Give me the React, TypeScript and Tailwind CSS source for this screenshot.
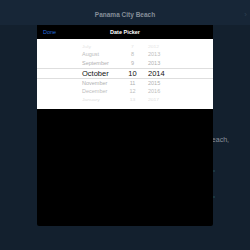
import React from "react";

const rows = [
  { m: "July", d: "7", y: "2012", cls: "h-[7px] text-[#e4e4e4] text-[5px] scale-y-[0.6]" },
  { m: "August", d: "8", y: "2013", cls: "h-[8px] text-[#bdbdbd] text-[5.5px]" },
  { m: "September", d: "9", y: "2013", cls: "h-[9px] text-[#b0b0b0] text-[5.5px]" },
];
const rowsBelow = [
  { m: "November", d: "11", y: "2015", cls: "h-[9px] text-[#b0b0b0] text-[5.5px]" },
  { m: "December", d: "12", y: "2016", cls: "h-[8px] text-[#bdbdbd] text-[5.5px]" },
  { m: "January", d: "13", y: "2017", cls: "h-[8px] text-[#e0e0e0] text-[5px] scale-y-[0.6]" },
];

const Row = ({ m, d, y, cls }: { m: string; d: string; y: string; cls: string }) => (
  <div className={`flex items-center pl-[45px] leading-none ${cls}`}>
    <span className="w-[40px]">{m}</span>
    <span className="w-[21px] text-center">{d}</span>
    <span className="ml-[5px]">{y}</span>
  </div>
);

const App = () => {
  return (
    <div
      className="relative w-[250px] h-[250px] overflow-hidden bg-[#13202e] flex flex-col"
      style={{ fontFamily: "'Liberation Sans', Arial, sans-serif" }}
    >
      {/* nav bar */}
      <div className="h-[25px] shrink-0 bg-[#172637] flex items-center justify-center relative">
        <span className="text-[6.5px] font-bold text-[#858e99] mt-[5px]">Panama City Beach</span>
        <span className="absolute right-[3px] top-[9px] text-[8px] text-[#2f4254]">›</span>
      </div>

      {/* background content */}
      <div className="flex flex-col items-end pr-[21px] pt-[110px] gap-[24px]">
        <p className="text-[7px] text-[#8a929c]">Panama City Beach,</p>
        <div className="flex flex-col gap-[24px] pr-[14px]">
          <span className="w-[2px] h-[2px] rounded-full bg-[#1f3f48]" />
          <span className="w-[2px] h-[2px] rounded-full bg-[#1f3f48]" />
        </div>
      </div>

      {/* date picker popover */}
      <div className="absolute left-[37px] top-[25px] w-[176px] h-[201px] bg-black rounded-b-[2px] flex flex-col overflow-hidden">
        <div className="h-[14px] flex items-center relative">
          <span className="absolute left-[6px] text-[5.5px] text-[#2468dc]">Done</span>
          <span className="mx-auto text-[5.5px] font-bold text-white">Date Picker</span>
        </div>
        <div className="h-[70px] bg-white flex flex-col pt-[5px]">
          {rows.map((r) => (
            <Row key={r.m} {...r} />
          ))}
          <div className="h-[11px] border-y border-[#dedede] flex items-center pl-[45px] text-[7.5px] text-[#111] leading-none">
            <span className="w-[40px]">October</span>
            <span className="w-[21px] text-center">10</span>
            <span className="ml-[5px]">2014</span>
          </div>
          {rowsBelow.map((r) => (
            <Row key={r.m} {...r} />
          ))}
        </div>
      </div>
    </div>
  );
};

export default App;
